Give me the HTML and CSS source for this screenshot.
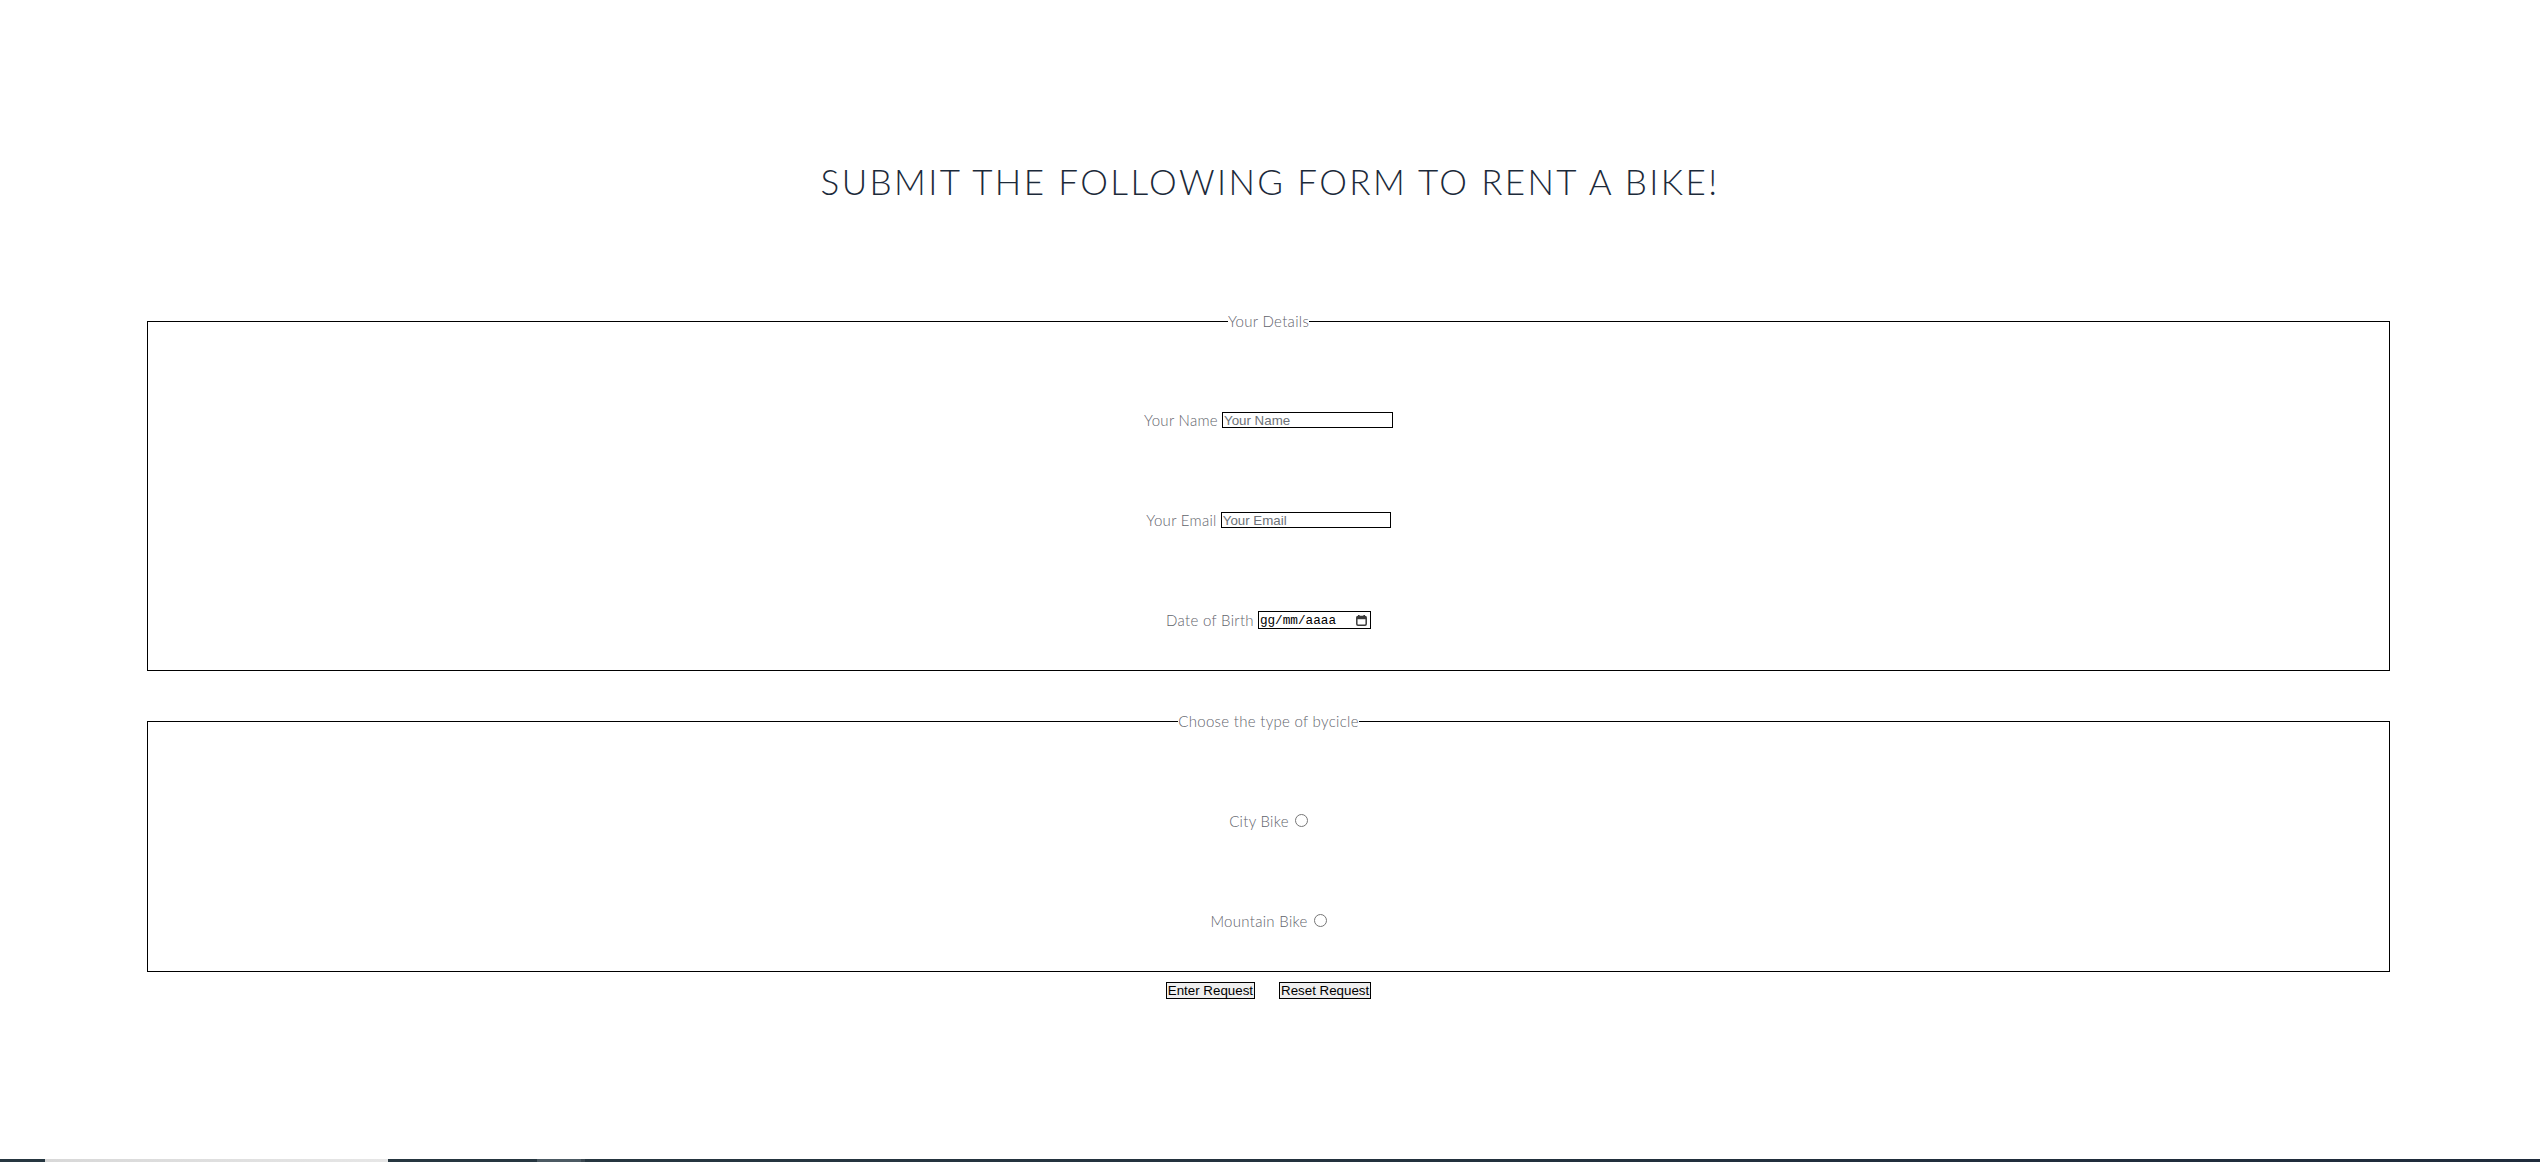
FILE: index.html
```html
<!DOCTYPE html>
<html lang="en">
<head>
<meta charset="utf-8">
<title>Rent a Bike</title>
<link rel="stylesheet" href="styles.css">
</head>
<body>
<main class="page">
  <h1 class="title">Submit the following form to rent a bike!</h1>
  <form class="rent-form" onsubmit="return false">
    <fieldset class="group group-details">
      <legend class="group-legend">Your Details</legend>
      <div class="row">
        <label class="row-label" for="name">Your Name</label>
        <input class="text-input name-input" id="name" type="text" placeholder="Your Name">
      </div>
      <div class="row">
        <label class="row-label" for="email">Your Email</label>
        <input class="text-input email-input" id="email" type="email" placeholder="Your Email">
      </div>
      <div class="row">
        <label class="row-label" for="dob">Date of Birth</label>
        <span class="date-field">
          <input class="date-input" id="dob" type="text" placeholder="gg/mm/aaaa">
          <svg class="cal-icon" width="11" height="11" viewBox="0 0 11 11" aria-hidden="true">
            <rect x="2" y="0" width="1.6" height="2.4" fill="#3b3b3b"/>
            <rect x="7.4" y="0" width="1.6" height="2.4" fill="#3b3b3b"/>
            <rect x="0.8" y="1.6" width="9.4" height="8.6" rx="1.2" fill="none" stroke="#3b3b3b" stroke-width="1.5"/>
            <rect x="0.8" y="1.6" width="9.4" height="2.6" fill="#3b3b3b"/>
          </svg>
        </span>
      </div>
    </fieldset>

    <fieldset class="group group-bike">
      <legend class="group-legend">Choose the type of bycicle</legend>
      <div class="row">
        <label class="row-label" for="city">City Bike</label>
        <input class="radio" id="city" type="radio" name="bike" value="city">
      </div>
      <div class="row">
        <label class="row-label" for="mountain">Mountain Bike</label>
        <input class="radio" id="mountain" type="radio" name="bike" value="mountain">
      </div>
    </fieldset>

    <div class="actions">
      <button class="btn" type="submit">Enter Request</button>
      <button class="btn" type="reset">Reset Request</button>
    </div>
  </form>
  <footer class="footer"></footer>
</main>
</body>
</html>
```

FILE: styles.css
```css
html, body {
  margin: 0;
  padding: 0;
  background: #ffffff;
}

body {
  font-family: "Lato", "Open Sans", "DejaVu Sans", sans-serif;
  color: #666;
  overflow: hidden;
}

.page {
  display: flex;
  flex-direction: column;
}

.title {
  margin: 158px 0 0;
  font-family: "Lato", "Open Sans", sans-serif;
  font-weight: 300;
  font-size: 35px;
  line-height: 46px;
  letter-spacing: 2.4px;
  text-transform: uppercase;
  text-align: center;
  color: #1c2a3a;
}

.rent-form {
  display: flex;
  flex-direction: column;
  width: 2243px;
  margin: 107px 0 0 147px;
}

.group {
  margin: 0;
  border: 1px solid #000;
  padding: 79px 0 40px;
  display: flex;
  flex-direction: column;
  align-items: center;
  gap: 80px;
  min-width: 0;
}

.group-bike {
  margin-top: 40px;
  padding-top: 80px;
}

.group-legend {
  margin: 0 auto;
  padding: 0;
  font-size: 15px;
  font-weight: 300;
  line-height: 20px;
  color: #5f646c;
  letter-spacing: 0.3px;
}

.row {
  height: 20px;
  display: flex;
  align-items: center;
  justify-content: center;
}

.row-label {
  font-size: 15px;
  font-weight: 300;
  line-height: 20px;
  color: #5f646c;
  letter-spacing: 0.3px;
  margin-right: 4px;
}

.text-input {
  box-sizing: border-box;
  height: 16px;
  border: 1px solid #000;
  border-radius: 0;
  padding: 0 1px;
  font-family: "Liberation Sans", Arial, sans-serif;
  font-size: 13.33px;
  color: #333;
  background: #fff;
  outline: none;
}

.text-input::placeholder {
  color: #6d7278;
}

.name-input { width: 171px; }
.email-input { width: 170px; }

.date-field {
  box-sizing: border-box;
  width: 113px;
  height: 18px;
  border: 1px solid #000;
  display: inline-flex;
  align-items: center;
  padding: 0 3px 0 1px;
  background: #fff;
}

.date-input {
  border: 0;
  padding: 0;
  margin: 0;
  width: 90px;
  height: 16px;
  font-family: "Liberation Mono", "DejaVu Sans Mono", monospace;
  font-size: 12.7px;
  color: #000;
  background: transparent;
  outline: none;
}

.date-input::placeholder {
  color: #000;
}

.cal-icon {
  margin-left: auto;
  display: block;
}

.radio {
  width: 13px;
  height: 13px;
  margin: 0 0 2px 2px;
}

.actions {
  display: flex;
  justify-content: center;
  gap: 24px;
  margin-top: 10px;
}

.btn {
  font-family: "Liberation Sans", Arial, sans-serif;
  font-size: 13.33px;
  line-height: 15px;
  padding: 0 1px;
  border: 1px solid #000;
  border-radius: 0;
  background: #efefef;
  color: #000;
}

.footer {
  margin-top: 160px;
  height: 200px;
  background:
    linear-gradient(to right,
      #263640 0, #263640 45px,
      #d8d8d8 45px, #e6e6e6 388px,
      #263640 388px, #263640 537px,
      #4c5a63 537px, #4c5a63 581px,
      #3a4750 581px, #3a4750 585px,
      #263640 585px, #1f2b3b 2540px);
}
```
